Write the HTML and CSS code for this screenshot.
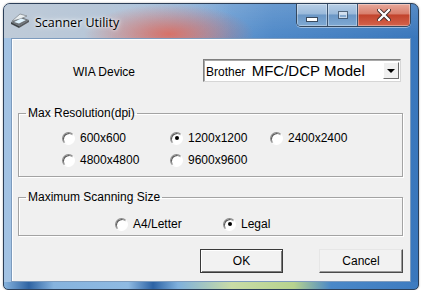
FILE: index.html
```html
<!DOCTYPE html>
<html lang="en">
<head>
  <meta charset="UTF-8" />
  <title>Scanner Utility</title>
  <link rel="stylesheet" href="styles.css">
</head>
<body>
  <div class="window">
    <div class="titlebar">
      <svg class="app-icon" width="20" height="16" viewBox="0 0 20 16">
        <polygon points="1,9 11,4 19,7 9,13" fill="#6e7378" />
        <polygon points="1,9 9,13 9,15 1,11" fill="#3f4347" />
        <polygon points="9,13 19,7 19,9 9,15" fill="#55595d" />
        <polygon points="2,8 10,1 17,3 10,6" fill="#e9eef0" stroke="#7a8085" stroke-width="0.7" />
        <polygon points="4,9 11,5.5 16,7 9,10.5" fill="#dff3ff" />
      </svg>
      <span class="title">Scanner Utility</span>
      <div class="caption-btns">
        <span class="cap-btn min"><span class="min-bar"></span></span>
        <span class="cap-btn max"><span class="max-box"></span></span>
        <span class="cap-btn close">
          <svg width="14" height="12" viewBox="0 0 14 12">
            <path d="M2 1 L12 11 M12 1 L2 11" stroke="#3b2a28" stroke-width="4" stroke-linecap="round" />
            <path d="M2 1 L12 11 M12 1 L2 11" stroke="#ffffff" stroke-width="2.4" stroke-linecap="round" />
          </svg>
        </span>
      </div>
    </div>

    <div class="client">
      <div class="device-row">
        <span class="device-label">WIA Device</span>
        <div class="combo">
          <span class="combo-text"><span class="brand">Brother</span> <span class="model">MFC/DCP Model</span></span>
          <span class="combo-arrow"></span>
        </div>
      </div>

      <fieldset class="group group-res">
        <legend>Max Resolution(dpi)</legend>
        <div class="radio-grid">
          <label class="radio"><span class="radio-mark"></span>600x600</label>
          <label class="radio"><span class="radio-mark checked"></span>1200x1200</label>
          <label class="radio"><span class="radio-mark"></span>2400x2400</label>
          <label class="radio"><span class="radio-mark"></span>4800x4800</label>
          <label class="radio"><span class="radio-mark"></span>9600x9600</label>
        </div>
      </fieldset>

      <fieldset class="group group-size">
        <legend>Maximum Scanning Size</legend>
        <div class="radio-grid">
          <label class="radio"><span class="radio-mark"></span>A4/Letter</label>
          <label class="radio"><span class="radio-mark checked"></span>Legal</label>
        </div>
      </fieldset>

      <div class="actions">
        <button class="btn btn-default">OK</button>
        <button class="btn btn-cancel">Cancel</button>
      </div>
    </div>
  </div>
</body>
</html>
```

FILE: styles.css
```css
body {
  margin: 0;
  background: #ffffff;
  font-family: "Liberation Sans", Arial, sans-serif;
  font-size: 12px;
  color: #000;
}

.window {
  width: 416px;
  height: 287px;
  margin: 3px 0 0 3px;
  box-sizing: border-box;
  border: 1px solid #2c3f58;
  border-radius: 7px 7px 5px 5px;
  padding: 0 7px 7px;
  display: flex;
  flex-direction: column;
  background:
    linear-gradient(to right, #86b3de 0, #2f64a3 6%, #86b3de 12%, #8fbae2 30%, #2d63a5 36%, #7fb0dc 42%, #c9dca6 55%, #b7d38f 70%, #4a88c8 79%, #3d7bc0 100%) left bottom / 100% 7px no-repeat,
    linear-gradient(to right, #a3c3e4 0%, #92b9e1 30%, #4f89c8 65%, #3a77bc 100%);
  box-shadow: 0 0 2px rgba(0, 0, 0, 0.35);
}

/* Title bar */
.titlebar {
  height: 34px;
  display: flex;
  align-items: flex-start;
  margin: 0 -7px;
  padding: 0 7px;
  border-radius: 6px 6px 0 0;
  background:
    radial-gradient(ellipse 85px 30px at 165px 30px, rgba(218, 110, 98, 0.95), rgba(218, 110, 98, 0)),
    linear-gradient(to right, #bfcbd8 0%, #b6c6d8 25%, rgba(170, 195, 222, 0) 55%),
    linear-gradient(to bottom, rgba(255, 255, 255, 0.15), rgba(255, 255, 255, 0));
}

.app-icon {
  margin: 9px 0 0 -1px;
  flex: none;
}

.title {
  margin: 11px 0 0 5px;
  font-family: "Open Sans", "Liberation Sans", sans-serif;
  font-size: 12.5px;
  line-height: 16px;
  color: #000;
  text-shadow: 0 0 6px #fff, 0 0 3px #fff;
}

.caption-btns {
  margin-left: auto;
  display: flex;
  height: 22px;
  border: 1px solid #34485f;
  border-top: none;
  border-radius: 0 0 5px 5px;
  overflow: hidden;
  box-shadow: 0 1px 0 rgba(255, 255, 255, 0.45);
}

.cap-btn {
  display: flex;
  align-items: center;
  justify-content: center;
  box-shadow: inset 0 0 0 1px rgba(255, 255, 255, 0.35);
}

.cap-btn.min,
.cap-btn.max {
  width: 30px;
  background: linear-gradient(to bottom, #b8cfe6 0%, #9ab9da 45%, #6b97c6 50%, #7fa9d3 100%);
  border-right: 1px solid #3b5370;
}

.cap-btn.max {
  width: 29px;
}

.cap-btn.close {
  width: 52px;
  background: linear-gradient(to bottom, #e8a99b 0%, #d87e6c 45%, #c2432c 50%, #d4634c 100%);
}

.min-bar {
  width: 10px;
  height: 3px;
  margin-top: 8px;
  background: #fff;
  border: 1px solid #3a4a5e;
}

.max-box {
  width: 8px;
  height: 6px;
  border: 1px solid #3a4a5e;
  box-shadow: inset 0 0 0 1px #e6eef7, inset 0 2px 0 1px #e6eef7;
  background: #8fb0d3;
  opacity: 0.75;
}

/* Client area */
.client {
  flex: 1;
  display: flex;
  flex-direction: column;
  background: #f0f0f0;
  border: 1px solid #7d9bbd;
  box-shadow: inset 1px 1px 0 #ffffff;
}

.device-row {
  margin-top: 20px;
  height: 23px;
  display: flex;
  align-items: center;
  padding: 0 9px 0 61px;
}

.device-label {
  padding-top: 2px;
}

.combo {
  margin-left: auto;
  width: 198px;
  height: 23px;
  box-sizing: border-box;
  display: flex;
  align-items: center;
  background: #fff;
  border: 1px solid;
  border-color: #7f7f7f #d6d6d6 #d6d6d6 #7f7f7f;
  box-shadow: inset 1px 1px 0 #a9a9a9;
}

.combo-text {
  flex: 1;
  padding-left: 2px;
  white-space: nowrap;
}

.brand {
  font-size: 12px;
}

.model {
  margin-left: 3px;
  font-size: 15px;
}

.combo-arrow {
  width: 16px;
  height: 17px;
  margin-right: 1px;
  box-sizing: border-box;
  display: flex;
  align-items: center;
  justify-content: center;
  background: #f0f0f0;
  border: 1px solid;
  border-color: #ffffff #6d6d6d #6d6d6d #ffffff;
}

.combo-arrow::after {
  content: '';
  border-left: 4px solid transparent;
  border-right: 4px solid transparent;
  border-top: 4px solid #000;
}

/* Group boxes */
.group {
  margin: 0 7px 0 6px;
  padding: 0;
  border: 1px solid #a3a3a3;
  box-shadow: 1px 1px 0 #ffffff, inset 1px 1px 0 #ffffff;
}

.group legend {
  margin-left: 7px;
  padding: 0 2px;
  line-height: 14px;
}

.group-res {
  margin-top: 24px;
  padding: 7px 0 5px;
}

.group-res .radio-grid {
  padding-left: 43px;
}

.group-size {
  margin-top: 13px;
  padding: 10px 0 1px;
}

.group-size .radio-grid {
  padding-left: 96px;
  grid-auto-rows: 20px;
}

.radio-grid {
  display: grid;
  grid-template-columns: 108px 100px auto;
  grid-auto-rows: 22px;
}

.radio {
  display: flex;
  align-items: center;
  gap: 5px;
}

.radio-mark {
  width: 11px;
  height: 11px;
  border: 1px solid;
  border-color: #8a8a8a #ffffff #ffffff #8a8a8a;
  border-radius: 50%;
  background: #ffffff;
  box-shadow: inset 1px 1px 0 #5a5a5a;
  display: flex;
  align-items: center;
  justify-content: center;
}

.radio-mark.checked::after {
  content: '';
  width: 4px;
  height: 4px;
  border-radius: 50%;
  background: #000;
}

/* Buttons */
.actions {
  margin-top: 13px;
  display: flex;
  justify-content: flex-end;
  gap: 36px;
  padding-right: 7px;
}

.btn {
  height: 24px;
  padding: 0;
  font-family: "Liberation Sans", Arial, sans-serif;
  font-size: 12px;
  color: #000;
  background: #f2f2f2;
  border: 1px solid;
}

.btn-default {
  width: 83px;
  border-color: #3a3a3a;
  box-shadow: inset 1px 1px 0 #ffffff, inset -1px -1px 0 #7a7a7a;
}

.btn-cancel {
  width: 84px;
  border-color: #e6e6e6 #4a4a4a #4a4a4a #e6e6e6;
  box-shadow: inset -1px -1px 0 #9a9a9a;
}
```
